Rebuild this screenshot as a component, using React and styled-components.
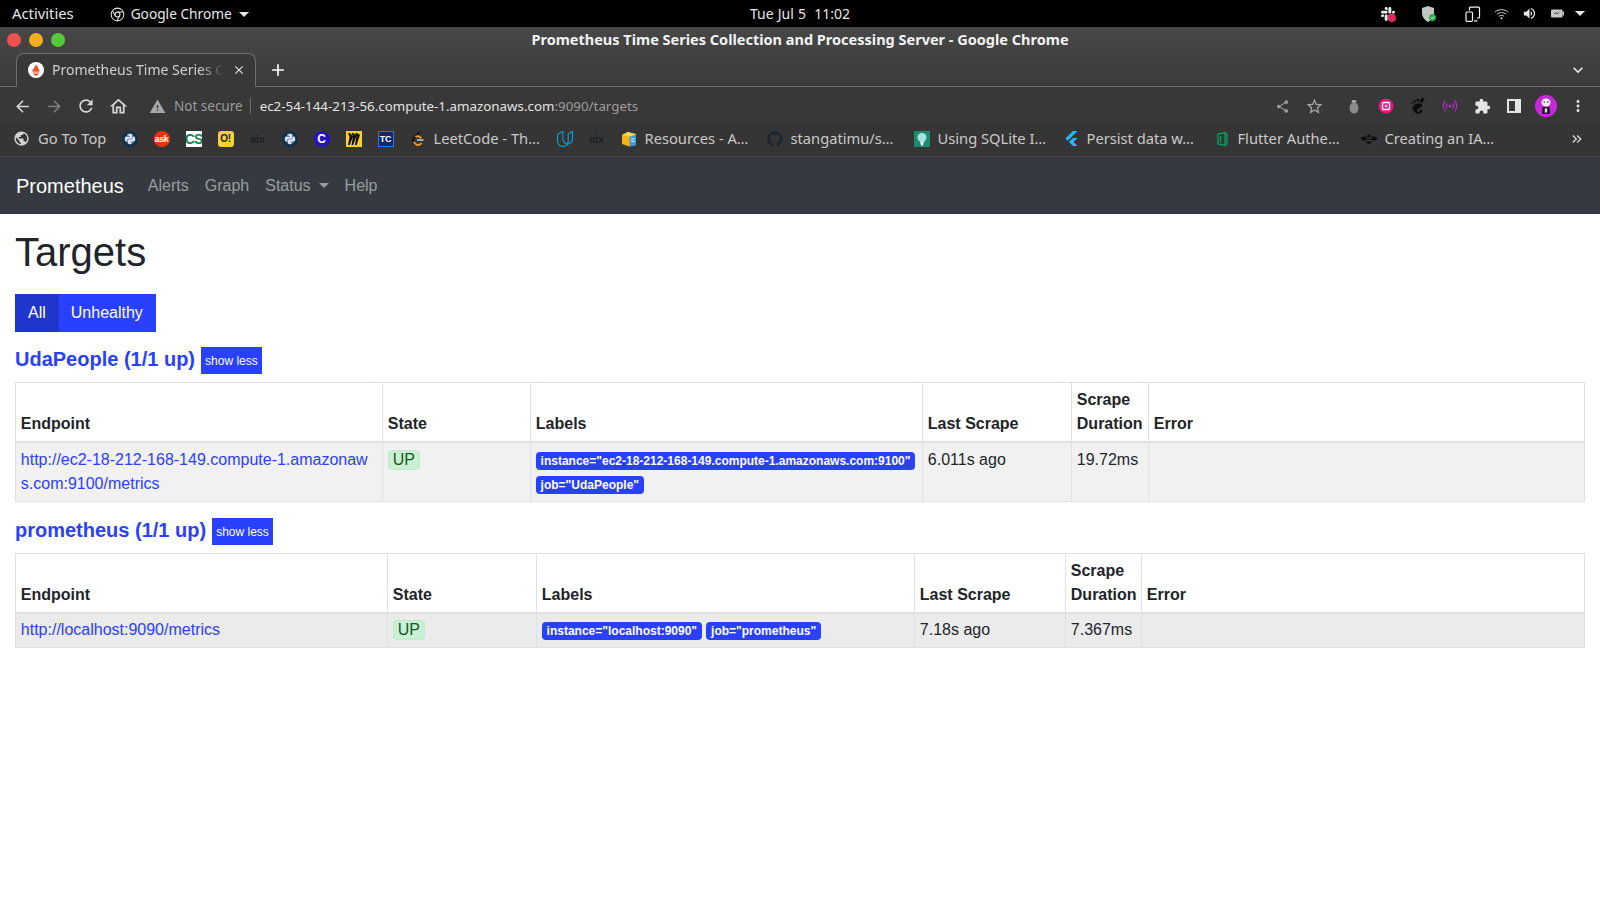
import React from 'react';
import styled, { createGlobalStyle } from 'styled-components';
import {
  MdArrowBack, MdArrowForward, MdRefresh, MdOutlineHome, MdWarning, MdStarBorder, MdShare,
  MdExtension, MdMoreVert, MdPublic, MdKeyboardArrowDown, MdClose, MdAdd, MdVolumeUp,
  MdKeyboardDoubleArrowRight,
} from 'react-icons/md';
import { FaPython, FaGithub } from 'react-icons/fa';
import { SiUdacity, SiFlutter, SiSlack, SiMiro, SiGnome } from 'react-icons/si';

const BLUE = '#2a40ff';
const UI_FONT = '"Noto Sans", "Open Sans", sans-serif';

const GlobalStyle = createGlobalStyle`
  html, body { margin: 0; padding: 0; background: #fff; }
  body {
    font-family: "Liberation Sans", Arial, sans-serif;
    font-size: 16px;
    line-height: 1.5;
    color: #212529;
  }
  * { box-sizing: border-box; }
`;

const Page = styled.div`
  width: 1600px;
  height: 900px;
  overflow: hidden;
  background: #fff;
`;

/* gnome top bar */
const TopBar = styled.div`
  height: 27px;
  background: #000;
  color: #e6e6e6;
  font-family: ${UI_FONT};
  font-size: 14px;
  display: grid;
  grid-template-columns: 1fr auto 1fr;
  align-items: center;
  padding: 0 12px;
`;

const TopLeft = styled.div`
  display: flex;
  align-items: center;
`;

const Activities = styled.span`
  font-size: 14.8px;
  margin-right: 36px;
`;

const AppMenu = styled.span`
  display: flex;
  align-items: center;
  gap: 6px;
  font-size: 13.7px;
  padding-top: 2px;
`;

const Caret = styled.span`
  width: 0;
  height: 0;
  border-left: ${(p) => p.$size}px solid transparent;
  border-right: ${(p) => p.$size}px solid transparent;
  border-top: ${(p) => p.$size}px solid ${(p) => p.$color};
  margin-left: ${(p) => p.$gap || 0}px;
`;

const Clock = styled.span`
  word-spacing: 0.5px;
`;

const Tray = styled.div`
  display: flex;
  justify-content: flex-end;
  align-items: center;
  gap: 10px;
  color: #e8e8e8;
  padding-right: 3px;
`;

const TraySlot = styled.span`
  display: flex;
  align-items: center;
  justify-content: center;
  position: relative;
  width: ${(p) => p.$w}px;
  margin-right: ${(p) => p.$mr || 0}px;
`;

const TrayDot = styled.span`
  position: absolute;
  right: ${(p) => p.$right}px;
  bottom: ${(p) => p.$bottom}px;
  width: ${(p) => p.$d}px;
  height: ${(p) => p.$d}px;
  border-radius: 50%;
  background: ${(p) => p.$color};
`;

/* chrome window frame */
const TitleBar = styled.div`
  height: 60px;
  background: linear-gradient(#474747, #3b3b3b);
  font-family: ${UI_FONT};
  display: flex;
  flex-direction: column;
`;

const TitleRow = styled.div`
  height: 26px;
  display: grid;
  grid-template-columns: 1fr auto 1fr;
  align-items: center;
  padding: 0 7px;
`;

const Lights = styled.div`
  display: flex;
  gap: 8px;
`;

const Light = styled.span`
  width: 14px;
  height: 14px;
  border-radius: 50%;
  background: ${(p) => p.$color};
`;

const WindowTitle = styled.div`
  color: #f2f2f2;
  font-size: 14.5px;
  font-weight: 700;
  white-space: nowrap;
`;

const TabStrip = styled.div`
  height: 34px;
  border-bottom: 1px solid #6e6e6e;
  display: flex;
  align-items: flex-end;
  padding: 0 12px 0 16px;
  color: #eee;
`;

const Tab = styled.div`
  width: 240px;
  height: 34px;
  margin-bottom: -1px;
  background: #383838;
  border: 1px solid #6e6e6e;
  border-bottom: none;
  border-radius: 8px 8px 0 0;
  display: flex;
  align-items: center;
  padding: 0 9px 2px 11px;
  gap: 8px;
`;

const TabTitle = styled.span`
  flex: 1;
  min-width: 0;
  overflow: hidden;
  white-space: nowrap;
  font-size: 14px;
  color: #cfcfcf;
  mask-image: linear-gradient(90deg, #000 86%, transparent 100%);
`;

const NewTab = styled.span`
  display: flex;
  align-self: center;
  margin-left: 12px;
`;

const TabMenu = styled.span`
  display: flex;
  align-self: center;
  margin-left: auto;
`;

const Toolbar = styled.div`
  height: 35px;
  background: #383838;
  font-family: ${UI_FONT};
  display: flex;
  align-items: center;
  padding: 3px 0 0 6px;
`;

const ToolButton = styled.span`
  width: 32px;
  display: flex;
  align-items: center;
  justify-content: center;
  margin-left: ${(p) => p.$ml || 0}px;
  color: ${(p) => p.$color || '#d6d6d6'};
`;

const Security = styled.span`
  display: flex;
  align-items: center;
  gap: 8px;
  margin-left: 15px;
  font-size: 13.5px;
  color: #9a9a9a;
`;

const UrlDivider = styled.span`
  width: 1px;
  height: 16px;
  background: #6e6e6e;
  margin: 0 9px 0 7px;
`;

const Url = styled.span`
  font-size: 13.35px;
  color: #e3e3e3;
  white-space: nowrap;
`;

const UrlTail = styled.span`
  color: #9c9c9c;
`;

const ToolRight = styled.div`
  margin-left: auto;
  display: flex;
  align-items: center;
  padding-right: 6px;
`;

const Avatar = styled.span`
  width: 22px;
  height: 22px;
  border-radius: 50%;
  background: #c62ad8;
  display: flex;
  align-items: center;
  justify-content: center;
`;

const BookmarkBar = styled.div`
  height: 35px;
  background: #353535;
  border-bottom: 1px solid #454545;
  font-family: ${UI_FONT};
  display: flex;
  align-items: center;
  padding-left: 5px;
  position: relative;
`;

const Bookmark = styled.span`
  display: flex;
  align-items: center;
  gap: 8px;
  padding: 0 8px;
`;

const BookmarkText = styled.span`
  width: ${(p) => p.$w}px;
  margin-right: 1px;
  padding-bottom: 2px;
  font-size: 14.7px;
  color: #c9c9c9;
  white-space: nowrap;
`;

const Favicon = styled.span`
  width: 16px;
  height: 16px;
  flex: none;
  display: flex;
  align-items: center;
  justify-content: center;
  overflow: hidden;
  font-family: "Liberation Sans", sans-serif;
  font-weight: 700;
  font-size: ${(p) => p.$size || 10}px;
  letter-spacing: ${(p) => p.$track || -0.3}px;
  line-height: 1;
  background: ${(p) => p.$bg || 'transparent'};
  color: ${(p) => p.$fg || '#fff'};
  border-radius: ${(p) => p.$radius || 0}px;
  border: ${(p) => (p.$line ? `1px solid ${p.$line}` : 'none')};
`;

const More = styled.span`
  margin-left: auto;
  width: 24px;
  margin-right: 11px;
  display: flex;
  justify-content: center;
  color: #d8d8d8;
`;

/* prometheus page */
const Navbar = styled.nav`
  height: 57px;
  background: #343a40;
  display: flex;
  align-items: center;
  padding: 0 16px;
`;

const Brand = styled.a`
  font-size: 20px;
  color: #fff;
  margin-right: 16px;
`;

const NavLink = styled.a`
  display: flex;
  align-items: center;
  padding: 0 8px;
  color: rgba(255, 255, 255, 0.5);
`;

const Content = styled.main`
  padding: 0 15px;
`;

const Heading = styled.h1`
  font-size: 40px;
  font-weight: 500;
  line-height: 1.2;
  margin: 14px 0 18px;
`;

const FilterGroup = styled.div`
  display: inline-flex;
  margin-bottom: 15px;
  vertical-align: top;
`;

const FilterButton = styled.button`
  height: 38px;
  padding: 0 13px 0 ${(p) => (p.$active ? '13px' : '12px')};
  border: none;
  font: inherit;
  color: #fff;
  background: ${(p) => (p.$active ? '#1f36cc' : BLUE)};
`;

const PoolHead = styled.div`
  display: flex;
  align-items: flex-start;
  gap: 6px;
  height: 27px;
  margin-bottom: 8px;
`;

const PoolTitle = styled.a`
  font-size: 20px;
  line-height: 24px;
  font-weight: 700;
  color: ${BLUE};
`;

const ToggleButton = styled.button`
  height: 27px;
  padding: 0 4px;
  border: none;
  background: ${BLUE};
  color: #fff;
  font-family: inherit;
  font-size: 12px;
`;

const Table = styled.table`
  width: 1570px;
  table-layout: fixed;
  border-collapse: collapse;
  margin-bottom: 16px;
`;

const Col = styled.col`
  width: ${(p) => p.$w}px;
`;

const HeadCell = styled.th`
  padding: 4.8px;
  text-align: left;
  vertical-align: bottom;
  font-weight: 700;
  border: 1px solid #dee2e6;
  border-bottom-width: 2px;
`;

const BodyRow = styled.tr`
  background: ${(p) => p.$bg};
`;

const Cell = styled.td`
  padding: ${(p) => p.$top}px 4.8px ${(p) => p.$bottom}px;
  vertical-align: top;
  border: 1px solid #dee2e6;
`;

const EndpointLink = styled.a`
  color: ${BLUE};
  word-break: break-all;
`;

const UpBadge = styled.span`
  display: inline-block;
  padding: 1px 4px;
  line-height: 1;
  color: #155724;
  background: #c9f0d3;
  border: 1px solid #bfe9c9;
  border-radius: 4px;
`;

const LabelBadge = styled.span`
  display: inline-block;
  padding: 3px 4.8px;
  font-size: 12px;
  font-weight: 700;
  line-height: 1;
  color: #fff;
  background: ${BLUE};
  border-radius: 4px;
`;

const PromIcon = () => (
  <svg width="16" height="16" viewBox="0 0 16 16">
    <circle cx="8" cy="8" r="8" fill="#fff" />
    <path d="M8 2c.4 1.500 2.800 2.600 2.400 5.600l.8-.8c.5 1.400.3 2.300-.2 2.900H4.900c-.6-.7-.7-1.800-.1-3l.8 1c-.3-2.500 2.600-3.500 2.400-5.700z" fill="#e6522c" />
    <path d="M4.800 10.400h6.400v1.100H4.800zM5.600 12h4.800c-.3 1-1.200 1.700-2.400 1.700S5.900 13 5.600 12z" fill="#e6522c" />
  </svg>
);

const ChromeIcon = () => (
  <svg width="15" height="15" viewBox="0 0 16 16" fill="none" stroke="#e6e6e6" strokeWidth="1.100">
    <circle cx="8" cy="8" r="6.800" />
    <circle cx="8" cy="8" r="2.600" />
    <path d="M8 5.400h6M5.700 9.300 2.800 4.200M10.300 9.300l-3 5.300" />
  </svg>
);

const ShieldIcon = () => (
  <svg width="16" height="18" viewBox="0 0 16 18">
    <path d="M7 1l6 2v5c0 4-2.500 7-6 9-3.500-2-6-5-6-9V3z" fill="#c4c4c4" />
    <circle cx="11.500" cy="12.500" r="3.500" fill="#2fae4e" />
    <path d="M10 12.500l1.100 1.100 2-2.100" fill="none" stroke="#fff" strokeWidth="0.900" />
  </svg>
);

const DevicesIcon = () => (
  <svg width="16" height="16" viewBox="0 0 16 16" fill="none" stroke="#f2f2f2" strokeWidth="1.200">
    <path d="M4.500 4.500V2.200q0-1 1-1h8q1 0 1 1V11q0 1-1 1h-1.500M9 14.800h3.500" />
    <rect x="1" y="6" width="6.500" height="9.300" rx="1" />
  </svg>
);

const WifiIcon = () => (
  <svg width="15" height="12" viewBox="0 0 15 12" fill="none" stroke="#dcdcdc" strokeWidth="0.900">
    <path d="M.8 4.200c3.800-3.400 9.600-3.400 13.400 0M2.800 6.300c2.700-2.300 6.700-2.300 9.400 0M4.800 8.300c1.600-1.200 3.800-1.200 5.400 0" />
    <circle cx="7.500" cy="10.300" r="1" fill="#dcdcdc" stroke="none" />
  </svg>
);

const BatteryIcon = () => (
  <svg width="13" height="9" viewBox="0 0 13 9">
    <rect x="0" y="0.500" width="11.500" height="8" rx="1" fill="#c8c8c8" />
    <rect x="11.500" y="2.500" width="1.500" height="4" fill="#c8c8c8" />
    <path d="M3 5l2-1.500 1 1.500 2.500-2" fill="none" stroke="#333" strokeWidth="0.800" />
  </svg>
);

const BugIcon = () => (
  <svg width="12" height="15" viewBox="0 0 12 15">
    <ellipse cx="6" cy="9" rx="4.500" ry="5.500" fill="#8a8a8a" />
    <path d="M3.500 3.500C3.500 1.800 4.500 1 6 1s2.500.8 2.500 2.500z" fill="#b8b8b8" />
  </svg>
);

const PinkStopIcon = () => (
  <svg width="16" height="16" viewBox="0 0 16 16">
    <circle cx="8" cy="8" r="7.500" fill="#e9177f" />
    <rect x="4.500" y="4.500" width="7" height="7" rx="1" fill="none" stroke="#fff" strokeWidth="1.400" />
    <rect x="6.800" y="6.800" width="2.400" height="2.400" fill="#f9b9d8" />
  </svg>
);

const BroadcastIcon = () => (
  <svg width="16" height="14" viewBox="0 0 16 14" fill="none" stroke="#b02bc4" strokeWidth="1.200">
    <path d="M3.500 1.500c-3 3-3 8 0 11M12.500 1.500c3 3 3 8 0 11M5.500 4.500c-1.500 1.500-1.500 3.500 0 5M10.500 4.500c1.500 1.500 1.500 3.500 0 5" />
    <circle cx="8" cy="7" r="0.900" fill="#b02bc4" />
  </svg>
);

const SidePanelIcon = () => (
  <svg width="14" height="14" viewBox="0 0 14 14">
    <path d="M0 0h14v14H0zM2 2v10h6V2z" fill="#e4e4e4" fillRule="evenodd" />
  </svg>
);

const AvatarFace = () => (
  <svg width="14" height="18" viewBox="0 0 14 18">
    <ellipse cx="7" cy="5.500" rx="4.500" ry="4" fill="#eee" />
    <circle cx="5.200" cy="5" r="0.800" fill="#222" />
    <circle cx="8.800" cy="5" r="0.800" fill="#222" />
    <path d="M3.500 10h7l.5 7H3z" fill="#1c1c1c" />
    <path d="M5.800 11.500h2.400v4H5.800z" fill="#ddd" />
  </svg>
);

const LeetIcon = () => (
  <svg width="16" height="16" viewBox="0 0 16 16" fill="none" strokeWidth="1.700">
    <path d="M9.500 1 3.500 7.500" stroke="#0d0d0d" />
    <path d="M3.500 7.500c-1 1.200-.8 2.300.2 3.300" stroke="#0d0d0d" />
    <path d="M3.700 10.800l2.200 2.400c1.300 1.300 3.200 1.300 4.500 0l1.100-1.200" stroke="#f0a21e" />
    <path d="M7 9h6.500" stroke="#bdbdbd" />
    <path d="M5.500 6.200c1.300-1.200 3-1.200 4.500 0l1.300 1.200" stroke="#f0a21e" />
  </svg>
);

const BoxIcon = () => (
  <svg width="16" height="16" viewBox="0 0 16 16">
    <path d="M1 4l6-3 8 2v11l-7 1.500L1 13z" fill="#f5b50f" />
    <path d="M8.500 5.500 15 3.500V14l-6.500 1.500z" fill="#3c9be0" />
    <path d="M10 8h3.500M10 10.500h3.500" stroke="#fff" strokeWidth="1" />
    <path d="M1 4l6-3 8 2.500-6.500 2z" fill="#ffd35c" />
  </svg>
);

const BulbIcon = () => (
  <svg width="16" height="16" viewBox="0 0 16 16">
    <rect width="16" height="16" fill="#1f8a70" />
    <circle cx="8" cy="6.500" r="4.500" fill="#a9e2e0" />
    <path d="M6 10.500h4L9 14.500H7z" fill="#e7f2ef" />
  </svg>
);

const AuthIcon = () => (
  <svg width="16" height="16" viewBox="0 0 16 16" fill="none" stroke="#07a35a" strokeWidth="1.300">
    <path d="M4 3l7-1.500v13L4 13zM11 3h2v10h-2M6.500 5v6" />
  </svg>
);

const BeeIcon = () => (
  <svg width="16" height="12" viewBox="0 0 16 12">
    <ellipse cx="3.500" cy="5.500" rx="3.500" ry="2" fill="#0c0c0c" />
    <ellipse cx="12.500" cy="5.500" rx="3.500" ry="2" fill="#0c0c0c" />
    <ellipse cx="8" cy="6.500" rx="3" ry="5" fill="#141414" />
    <path d="M5 5h6M5 7.500h6" stroke="#555" strokeWidth="0.700" />
  </svg>
);

const AlxMark = () => <Favicon $fg="#1b2126" $size={11}>alx</Favicon>;
const PyMark = () => (
  <Favicon $bg="#12314f" $radius={8} $fg="#d7e7f5"><FaPython size={12} /></Favicon>
);

const bookmarks = [
  { icon: <MdPublic size={17} color="#d4d4d4" />, text: 'Go To Top', w: 66.5 },
  { icon: <PyMark /> },
  { icon: <Favicon $bg="#e8330a" $radius={8} $size={9}>ask</Favicon> },
  { icon: <Favicon $bg="#fff" $fg="#13804f" $size={14} $track={-1}>CS</Favicon> },
  { icon: <Favicon $bg="#f7cf38" $fg="#222" $radius={3} $size={10}>O!</Favicon> },
  { icon: <AlxMark /> },
  { icon: <PyMark /> },
  { icon: <Favicon $bg="#2610c8" $radius={8} $size={12}>C</Favicon> },
  { icon: <Favicon $bg="#ffd02f" $fg="#111"><SiMiro size={12} /></Favicon> },
  { icon: <Favicon $bg="#0b2a6b" $line="#2e74d8" $size={9}>TC</Favicon> },
  { icon: <LeetIcon />, text: 'LeetCode - Th…', w: 106 },
  { icon: <SiUdacity size={16} color="#02a9e0" /> },
  { icon: <AlxMark /> },
  { icon: <BoxIcon />, text: 'Resources - A…', w: 105 },
  { icon: <FaGithub size={16} color="#1e2530" />, text: 'stangatimu/s…', w: 106 },
  { icon: <BulbIcon />, text: 'Using SQLite I…', w: 109 },
  { icon: <SiFlutter size={15} color="#29b6f6" />, text: 'Persist data w…', w: 110 },
  { icon: <AuthIcon />, text: 'Flutter Authe…', w: 106 },
  { icon: <BeeIcon />, text: 'Creating an IA…', w: 110 },
];

const pools = [
  {
    name: 'UdaPeople (1/1 up)',
    cols: [367, 148, 392, 149, 77, 436],
    rowBg: '#f1f1f1',
    padTop: 5.8,
    padBottom: 4.8,
    endpoint: 'http://ec2-18-212-168-149.compute-1.amazonaws.com:9100/metrics',
    labels: ['instance="ec2-18-212-168-149.compute-1.amazonaws.com:9100"', 'job="UdaPeople"'],
    scrape: '6.011s ago',
    duration: '19.72ms',
  },
  {
    name: 'prometheus (1/1 up)',
    cols: [372, 149, 378, 151, 76, 443],
    rowBg: '#ebebeb',
    padTop: 3.8,
    padBottom: 5.8,
    endpoint: 'http://localhost:9090/metrics',
    labels: ['instance="localhost:9090"', 'job="prometheus"'],
    scrape: '7.18s ago',
    duration: '7.367ms',
  },
];

const ScrapePool = ({ pool }) => {
  const pad = { $top: pool.padTop, $bottom: pool.padBottom };
  return (
    <section>
      <PoolHead>
        <PoolTitle>{pool.name}</PoolTitle>
        <ToggleButton>show less</ToggleButton>
      </PoolHead>
      <Table>
        <colgroup>
          {pool.cols.map((w, i) => <Col key={i} $w={w} />)}
        </colgroup>
        <thead>
          <tr>
            <HeadCell>Endpoint</HeadCell>
            <HeadCell>State</HeadCell>
            <HeadCell>Labels</HeadCell>
            <HeadCell>Last Scrape</HeadCell>
            <HeadCell>Scrape Duration</HeadCell>
            <HeadCell>Error</HeadCell>
          </tr>
        </thead>
        <tbody>
          <BodyRow $bg={pool.rowBg}>
            <Cell {...pad}><EndpointLink>{pool.endpoint}</EndpointLink></Cell>
            <Cell {...pad}><UpBadge>UP</UpBadge></Cell>
            <Cell {...pad}>
              {pool.labels.map((label) => (
                <React.Fragment key={label}>
                  <LabelBadge>{label}</LabelBadge>{' '}
                </React.Fragment>
              ))}
            </Cell>
            <Cell {...pad}>{pool.scrape}</Cell>
            <Cell {...pad}>{pool.duration}</Cell>
            <Cell {...pad} />
          </BodyRow>
        </tbody>
      </Table>
    </section>
  );
};

export default function App() {
  return (
    <Page>
      <GlobalStyle />
      <TopBar>
        <TopLeft>
          <Activities>Activities</Activities>
          <AppMenu>
            <ChromeIcon />
            Google Chrome
            <Caret $size={5} $color="#e6e6e6" $gap={1} />
          </AppMenu>
        </TopLeft>
        <Clock>Tue Jul 5&nbsp;&nbsp;11:02</Clock>
        <Tray>
          <TraySlot $w={16} $mr={15}>
            <SiSlack size={14} color="#eee" />
            <TrayDot $right={0} $bottom={-1} $d={8} $color="#e8245f" />
          </TraySlot>
          <TraySlot $w={16} $mr={18}><ShieldIcon /></TraySlot>
          <TraySlot $w={16} $mr={2}><DevicesIcon /></TraySlot>
          <TraySlot $w={16} $mr={2}><WifiIcon /></TraySlot>
          <TraySlot $w={16} $mr={4}><MdVolumeUp size={15} /></TraySlot>
          <TraySlot $w={13} $mr={1}><BatteryIcon /></TraySlot>
          <Caret $size={5} $color="#e8e8e8" />
        </Tray>
      </TopBar>

      <TitleBar>
        <TitleRow>
          <Lights>
            <Light $color="#ec5350" />
            <Light $color="#f2ae1c" />
            <Light $color="#56c93a" />
          </Lights>
          <WindowTitle>Prometheus Time Series Collection and Processing Server - Google Chrome</WindowTitle>
        </TitleRow>
        <TabStrip>
          <Tab>
            <PromIcon />
            <TabTitle>Prometheus Time Series Collection</TabTitle>
            <MdClose size={14} color="#e0e0e0" />
          </Tab>
          <NewTab><MdAdd size={20} color="#fff" /></NewTab>
          <TabMenu><MdKeyboardArrowDown size={20} color="#e8e8e8" /></TabMenu>
        </TabStrip>
      </TitleBar>

      <Toolbar>
        <ToolButton><MdArrowBack size={19} /></ToolButton>
        <ToolButton $color="#7e7e7e"><MdArrowForward size={19} /></ToolButton>
        <ToolButton><MdRefresh size={20} /></ToolButton>
        <ToolButton><MdOutlineHome size={21} /></ToolButton>
        <Security>
          <MdWarning size={17} color="#a8a8a8" />
          Not secure
        </Security>
        <UrlDivider />
        <Url>
          ec2-54-144-213-56.compute-1.amazonaws.com<UrlTail>:9090/targets</UrlTail>
        </Url>
        <ToolRight>
          <ToolButton $color="#9a9a9a"><MdShare size={15} /></ToolButton>
          <ToolButton $color="#a8a8a8"><MdStarBorder size={19} /></ToolButton>
          <ToolButton $ml={8}><BugIcon /></ToolButton>
          <ToolButton><PinkStopIcon /></ToolButton>
          <ToolButton $color="#0c0c0c"><SiGnome size={16} /></ToolButton>
          <ToolButton><BroadcastIcon /></ToolButton>
          <ToolButton $color="#e4e4e4"><MdExtension size={17} /></ToolButton>
          <ToolButton><SidePanelIcon /></ToolButton>
          <ToolButton><Avatar><AvatarFace /></Avatar></ToolButton>
          <ToolButton $color="#e0e0e0"><MdMoreVert size={18} /></ToolButton>
        </ToolRight>
      </Toolbar>

      <BookmarkBar>
        {bookmarks.map((b, i) => (
          <Bookmark key={i}>
            {b.icon}
            {b.text && <BookmarkText $w={b.w}>{b.text}</BookmarkText>}
          </Bookmark>
        ))}
        <More><MdKeyboardDoubleArrowRight size={16} /></More>
      </BookmarkBar>

      <Navbar>
        <Brand>Prometheus</Brand>
        <NavLink>Alerts</NavLink>
        <NavLink>Graph</NavLink>
        <NavLink>
          Status
          <Caret $size={5} $color="rgba(255,255,255,0.5)" $gap={8} />
        </NavLink>
        <NavLink>Help</NavLink>
      </Navbar>

      <Content>
        <Heading>Targets</Heading>
        <FilterGroup>
          <FilterButton $active>All</FilterButton>
          <FilterButton>Unhealthy</FilterButton>
        </FilterGroup>
        {pools.map((pool) => <ScrapePool key={pool.name} pool={pool} />)}
      </Content>
    </Page>
  );
}
